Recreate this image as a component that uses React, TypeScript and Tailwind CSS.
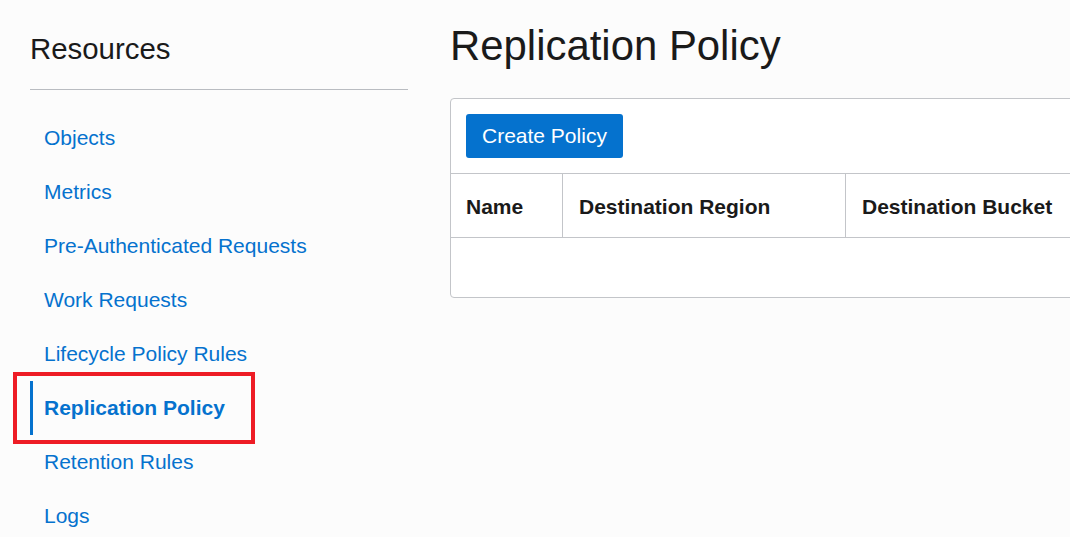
const resources = [
  "Objects",
  "Metrics",
  "Pre-Authenticated Requests",
  "Work Requests",
  "Lifecycle Policy Rules",
  "Replication Policy",
  "Retention Rules",
  "Logs",
];

const active = "Replication Policy";

function Sidebar() {
  return (
    <aside className="w-[378px] shrink-0 pt-[34px]">
      <h2 className="text-[29.4px] leading-[29px] text-[#1a1a1a]">Resources</h2>
      <div className="mt-[26px] h-px bg-[#b9bcc1]" />
      <ul className="mt-[21px]">
        {resources.map((r) => {
          const isActive = r === active;
          return (
            <li key={r} className="relative h-[54px]">
              {isActive && (
                <>
                  <span className="absolute left-0 top-0 h-full w-[3px] bg-[#0572ce]" />
                  {/* annotation box */}
                  <span className="pointer-events-none absolute -left-[17px] -top-[9px] h-[72px] w-[242px] border-4 border-[#ee1c25]" />
                </>
              )}
              <a
                href="#"
                className={
                  "flex h-full items-center pl-[14px] text-[21px] text-[#0572ce] " +
                  (isActive ? "font-bold" : "")
                }
              >
                {r}
              </a>
            </li>
          );
        })}
      </ul>
    </aside>
  );
}

function PolicyTable() {
  return (
    <div className="mt-[31px] w-[760px] rounded-[4px] border border-[#c3c5c9] bg-white">
      <div className="px-[15px] pb-[15px] pt-[15px]">
        <button className="h-[44px] rounded-[3px] bg-[#0572ce] px-[16px] text-[21px] text-white">
          Create Policy
        </button>
      </div>
      <div className="flex h-[65px] border-y border-[#c3c5c9] text-[21px] font-bold text-[#1a1a1a]">
        <div className="flex w-[112px] items-center border-r border-[#c3c5c9] pl-[15px] pt-[4px]">Name</div>
        <div className="flex w-[283px] items-center border-r border-[#c3c5c9] pl-[16px] pt-[4px]">
          Destination Region
        </div>
        <div className="flex flex-1 items-center pl-[16px] pt-[4px]">Destination Bucket</div>
      </div>
      <div className="h-[59px]" />
    </div>
  );
}

export default function App() {
  return (
    <div
      className="flex h-[537px] w-full overflow-hidden bg-[#fcfcfc]"
      style={{ fontFamily: '"Liberation Sans", Arial, sans-serif' }}
    >
      <div className="pl-[30px]">
        <Sidebar />
      </div>
      <main className="min-w-0 flex-1 pl-[42px] pt-[25px]">
        <h1 className="text-[41.9px] leading-[41.6px] text-[#1a1a1a]">Replication Policy</h1>
        <PolicyTable />
      </main>
    </div>
  );
}
